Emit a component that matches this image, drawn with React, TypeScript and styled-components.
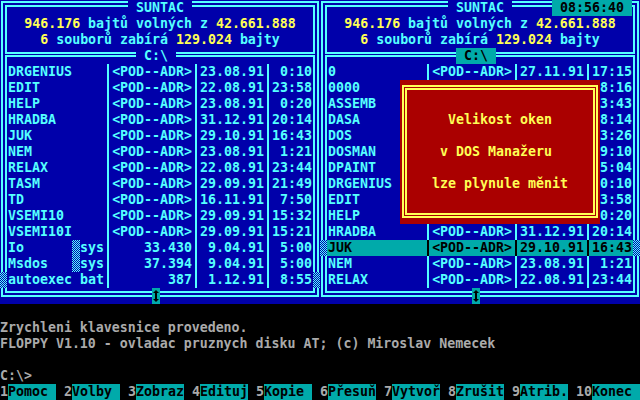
import React from "react";
import styled, { createGlobalStyle, css } from "styled-components";

const BLUE = "#0000AA";
const CYAN = "#55FFFF";
const TEAL = "#00AAAA";
const YELLOW = "#FFFF55";
const RED = "#AA0000";
const GRAY = "#AAAAAA";

const Global = createGlobalStyle`
  html, body { margin: 0; padding: 0; background: #000; }
  * { box-sizing: border-box; }
`;

const dots = css`
  background: repeating-conic-gradient(${CYAN} 0 25%, ${BLUE} 0 50%) 0 0 / 2px 2px;
`;

const Screen = styled.div`
  position: relative;
  width: 640px;
  height: 400px;
  overflow: hidden;
  display: grid;
  grid-template-rows: 304px 96px;
  background: #000;
  font-family: "DejaVu Sans Mono", "Liberation Mono", monospace;
  font-weight: bold;
  font-size: 13.28px;
  line-height: 16px;
  white-space: pre;
`;

const Panels = styled.div`
  display: grid;
  grid-template-columns: 320px 320px;
`;

const Panel = styled.section`
  position: relative;
  height: 304px;
  padding: 1px 1px 7px 1px;
  background: ${BLUE};
  color: ${CYAN};
`;

const Frame = styled.div`
  height: 100%;
  border: 2px solid ${CYAN};
  padding: 2px;
  display: flex;
  flex-direction: column;
  gap: 1px;
`;

const InfoBox = styled.div`
  height: 49px;
  border: 2px solid ${CYAN};
  padding-top: 9px;
  text-align: center;
`;

const InfoLine = styled.div`
  height: 16px;
`;

const Hi = styled.span`
  color: ${YELLOW};
`;

const FileBox = styled.div`
  flex: 1;
  border: 2px solid ${CYAN};
  padding-top: 7px;
  display: flex;
  flex-direction: column;
`;

const FileRow = styled.div<{ $sel?: boolean; $cursor?: boolean }>`
  position: relative;
  height: 16px;
  display: grid;
  grid-template-columns: 97px 8px 80px 8px 64px 8px 40px 1px;
  background: ${(p) => (p.$sel ? TEAL : "transparent")};
  color: ${(p) => (p.$sel ? "#000" : CYAN)};
  --sep: ${(p) => (p.$sel ? "#000" : CYAN)};
  ${(p) =>
    p.$cursor &&
    css`
      &::before,
      &::after {
        content: "";
        position: absolute;
        top: 0;
        width: 7px;
        height: 16px;
        ${dots}
      }
      &::before { left: -7px; }
      &::after { left: 100%; }
    `}
`;

const NameCell = styled.div`
  display: flex;
  padding-left: 1px;
`;

const NamePart = styled.span`
  width: 64px;
`;

const AttrMark = styled.span<{ $on?: boolean }>`
  width: 8px;
  height: 16px;
  ${(p) => p.$on && dots}
`;

const ExtPart = styled.span`
  width: 24px;
`;

const Sep = styled.span`
  background: linear-gradient(
    to right,
    transparent 3px,
    var(--sep) 3px,
    var(--sep) 5px,
    transparent 5px
  );
`;

const Cell = styled.span`
  text-align: right;
`;

const Title = styled.div`
  position: absolute;
  top: 0;
  left: 128px;
  width: 64px;
  height: 16px;
  text-align: center;
  background: ${BLUE};
  color: ${CYAN};
`;

const PathLabel = styled.div<{ $active?: boolean }>`
  position: absolute;
  top: 48px;
  left: 136px;
  width: 40px;
  height: 16px;
  text-align: center;
  background: ${(p) => (p.$active ? TEAL : BLUE)};
  color: ${(p) => (p.$active ? "#000" : CYAN)};
`;

const Clock = styled.div`
  position: absolute;
  top: 0;
  left: 232px;
  width: 80px;
  height: 16px;
  text-align: center;
  background: ${TEAL};
  color: #000;
`;

const ScrollMark = styled.div`
  position: absolute;
  top: 288px;
  left: 152px;
  width: 8px;
  height: 16px;
  background: ${TEAL};
  display: flex;
`;

const Console = styled.div`
  display: flex;
  flex-direction: column;
  color: ${GRAY};
  background: #000;
`;

const ConsoleLine = styled.div`
  height: 16px;
`;

const KeyBar = styled.div`
  height: 16px;
  display: flex;
  gap: 8px;
`;

const KeyItem = styled.div`
  display: flex;
`;

const KeyNum = styled.span`
  color: ${GRAY};
`;

const KeyLabel = styled.span`
  width: 48px;
  background: ${TEAL};
  color: #000;
`;

const Popup = styled.div`
  position: absolute;
  left: 400px;
  top: 80px;
  width: 200px;
  height: 144px;
  padding: 5px 2px 6px 2px;
  background: ${RED};
  color: ${YELLOW};
  z-index: 3;
`;

const PopupOuter = styled.div`
  height: 100%;
  border: 2px solid ${YELLOW};
  padding: 1px;
`;

const PopupInner = styled.div`
  height: 100%;
  border: 2px solid ${YELLOW};
  padding-top: 22px;
  display: flex;
  flex-direction: column;
  align-items: center;
  gap: 16px;
`;

const PopupLine = styled.div<{ $shift?: number }>`
  height: 16px;
  margin-right: ${(p) => p.$shift ?? 0}px;
`;

type Row = {
  n: string;
  e?: string;
  s: string;
  d: string;
  t: string;
  sys?: boolean;
};

const DIR = "<POD--ADR>";

const leftRows: Row[] = [
  { n: "DRGENIUS", s: DIR, d: "23.08.91", t: "0:10" },
  { n: "EDIT", s: DIR, d: "22.08.91", t: "23:58" },
  { n: "HELP", s: DIR, d: "23.08.91", t: "0:20" },
  { n: "HRADBA", s: DIR, d: "31.12.91", t: "20:14" },
  { n: "JUK", s: DIR, d: "29.10.91", t: "16:43" },
  { n: "NEM", s: DIR, d: "23.08.91", t: "1:21" },
  { n: "RELAX", s: DIR, d: "22.08.91", t: "23:44" },
  { n: "TASM", s: DIR, d: "29.09.91", t: "21:49" },
  { n: "TD", s: DIR, d: "16.11.91", t: "7:50" },
  { n: "VSEMI10", s: DIR, d: "29.09.91", t: "15:32" },
  { n: "VSEMI10I", s: DIR, d: "29.09.91", t: "15:21" },
  { n: "Io", e: "sys", s: "33.430", d: "9.04.91", t: "5:00", sys: true },
  { n: "Msdos", e: "sys", s: "37.394", d: "9.04.91", t: "5:00", sys: true },
  { n: "autoexec", e: "bat", s: "387", d: "1.12.91", t: "8:55" },
];

/* Rows 1–9 lie under the message box; only their visible ends are given. */
const rightRows: Row[] = [
  { n: "0", s: DIR, d: "27.11.91", t: "17:15" },
  { n: "0000", s: "", d: "", t: "8:16" },
  { n: "ASSEMB", s: "", d: "", t: "3:43" },
  { n: "DASA", s: "", d: "", t: "8:14" },
  { n: "DOS", s: "", d: "", t: "3:26" },
  { n: "DOSMAN", s: "", d: "", t: "9:10" },
  { n: "DPAINT", s: "", d: "", t: "5:04" },
  { n: "DRGENIUS", s: "", d: "", t: "0:10" },
  { n: "EDIT", s: "", d: "", t: "3:58" },
  { n: "HELP", s: "", d: "", t: "0:20" },
  { n: "HRADBA", s: DIR, d: "31.12.91", t: "20:14" },
  { n: "JUK", s: DIR, d: "29.10.91", t: "16:43" },
  { n: "NEM", s: DIR, d: "23.08.91", t: "1:21" },
  { n: "RELAX", s: DIR, d: "22.08.91", t: "23:44" },
];

const keys = [
  ["1", "Pomoc"],
  ["2", "Volby"],
  ["3", "Zobraz"],
  ["4", "Edituj"],
  ["5", "Kopie"],
  ["6", "Přesuň"],
  ["7", "Vytvoř"],
  ["8", "Zrušit"],
  ["9", "Atrib."],
  ["10", "Konec"],
];

const UpDown = () => (
  <svg width="8" height="16" viewBox="0 0 8 16">
    <polygon points="4,2 7,5 1,5" fill="#000" />
    <rect x="3" y="5" width="2" height="6" fill="#000" />
    <polygon points="1,11 7,11 4,14" fill="#000" />
  </svg>
);

function FilePanel({
  rows,
  cursor,
  active,
  clock,
}: {
  rows: Row[];
  cursor: number;
  active?: boolean;
  clock?: string;
}) {
  return (
    <Panel>
      <Frame>
        <InfoBox>
          <InfoLine>
            <Hi>946.176</Hi> bajtů volných z <Hi>42.661.888</Hi>
          </InfoLine>
          <InfoLine>
            <Hi>6</Hi> souborů zabírá <Hi>129.024</Hi> bajty
          </InfoLine>
        </InfoBox>
        <FileBox>
          {rows.map((r, i) => (
            <FileRow key={i} $cursor={i === cursor} $sel={active && i === cursor}>
              <NameCell>
                <NamePart>{r.n}</NamePart>
                <AttrMark $on={r.sys} />
                <ExtPart>{r.e ?? ""}</ExtPart>
              </NameCell>
              <Sep />
              <Cell>{r.s}</Cell>
              <Sep />
              <Cell>{r.d}</Cell>
              <Sep />
              <Cell>{r.t}</Cell>
              <span />
            </FileRow>
          ))}
        </FileBox>
      </Frame>
      <Title>SUNTAC</Title>
      <PathLabel $active={active}>C:\</PathLabel>
      {clock && <Clock>{clock}</Clock>}
      <ScrollMark>
        <UpDown />
      </ScrollMark>
    </Panel>
  );
}

export default function App() {
  return (
    <>
      <Global />
      <Screen>
        <Panels>
          <FilePanel rows={leftRows} cursor={13} />
          <FilePanel rows={rightRows} cursor={11} active clock="08:56:40" />
        </Panels>
        <Console>
          <ConsoleLine />
          <ConsoleLine>Zrychleni klavesnice provedeno.</ConsoleLine>
          <ConsoleLine>
            FLOPPY V1.10 - ovladac pruznych disku AT; (c) Miroslav Nemecek
          </ConsoleLine>
          <ConsoleLine />
          <ConsoleLine>C:\&gt;</ConsoleLine>
          <KeyBar>
            {keys.map(([n, l]) => (
              <KeyItem key={n}>
                <KeyNum>{n}</KeyNum>
                <KeyLabel>{l}</KeyLabel>
              </KeyItem>
            ))}
          </KeyBar>
        </Console>
        <Popup>
          <PopupOuter>
            <PopupInner>
              <PopupLine>Velikost oken</PopupLine>
              <PopupLine $shift={8}>v DOS Manažeru</PopupLine>
              <PopupLine>lze plynule měnit</PopupLine>
            </PopupInner>
          </PopupOuter>
        </Popup>
      </Screen>
    </>
  );
}
